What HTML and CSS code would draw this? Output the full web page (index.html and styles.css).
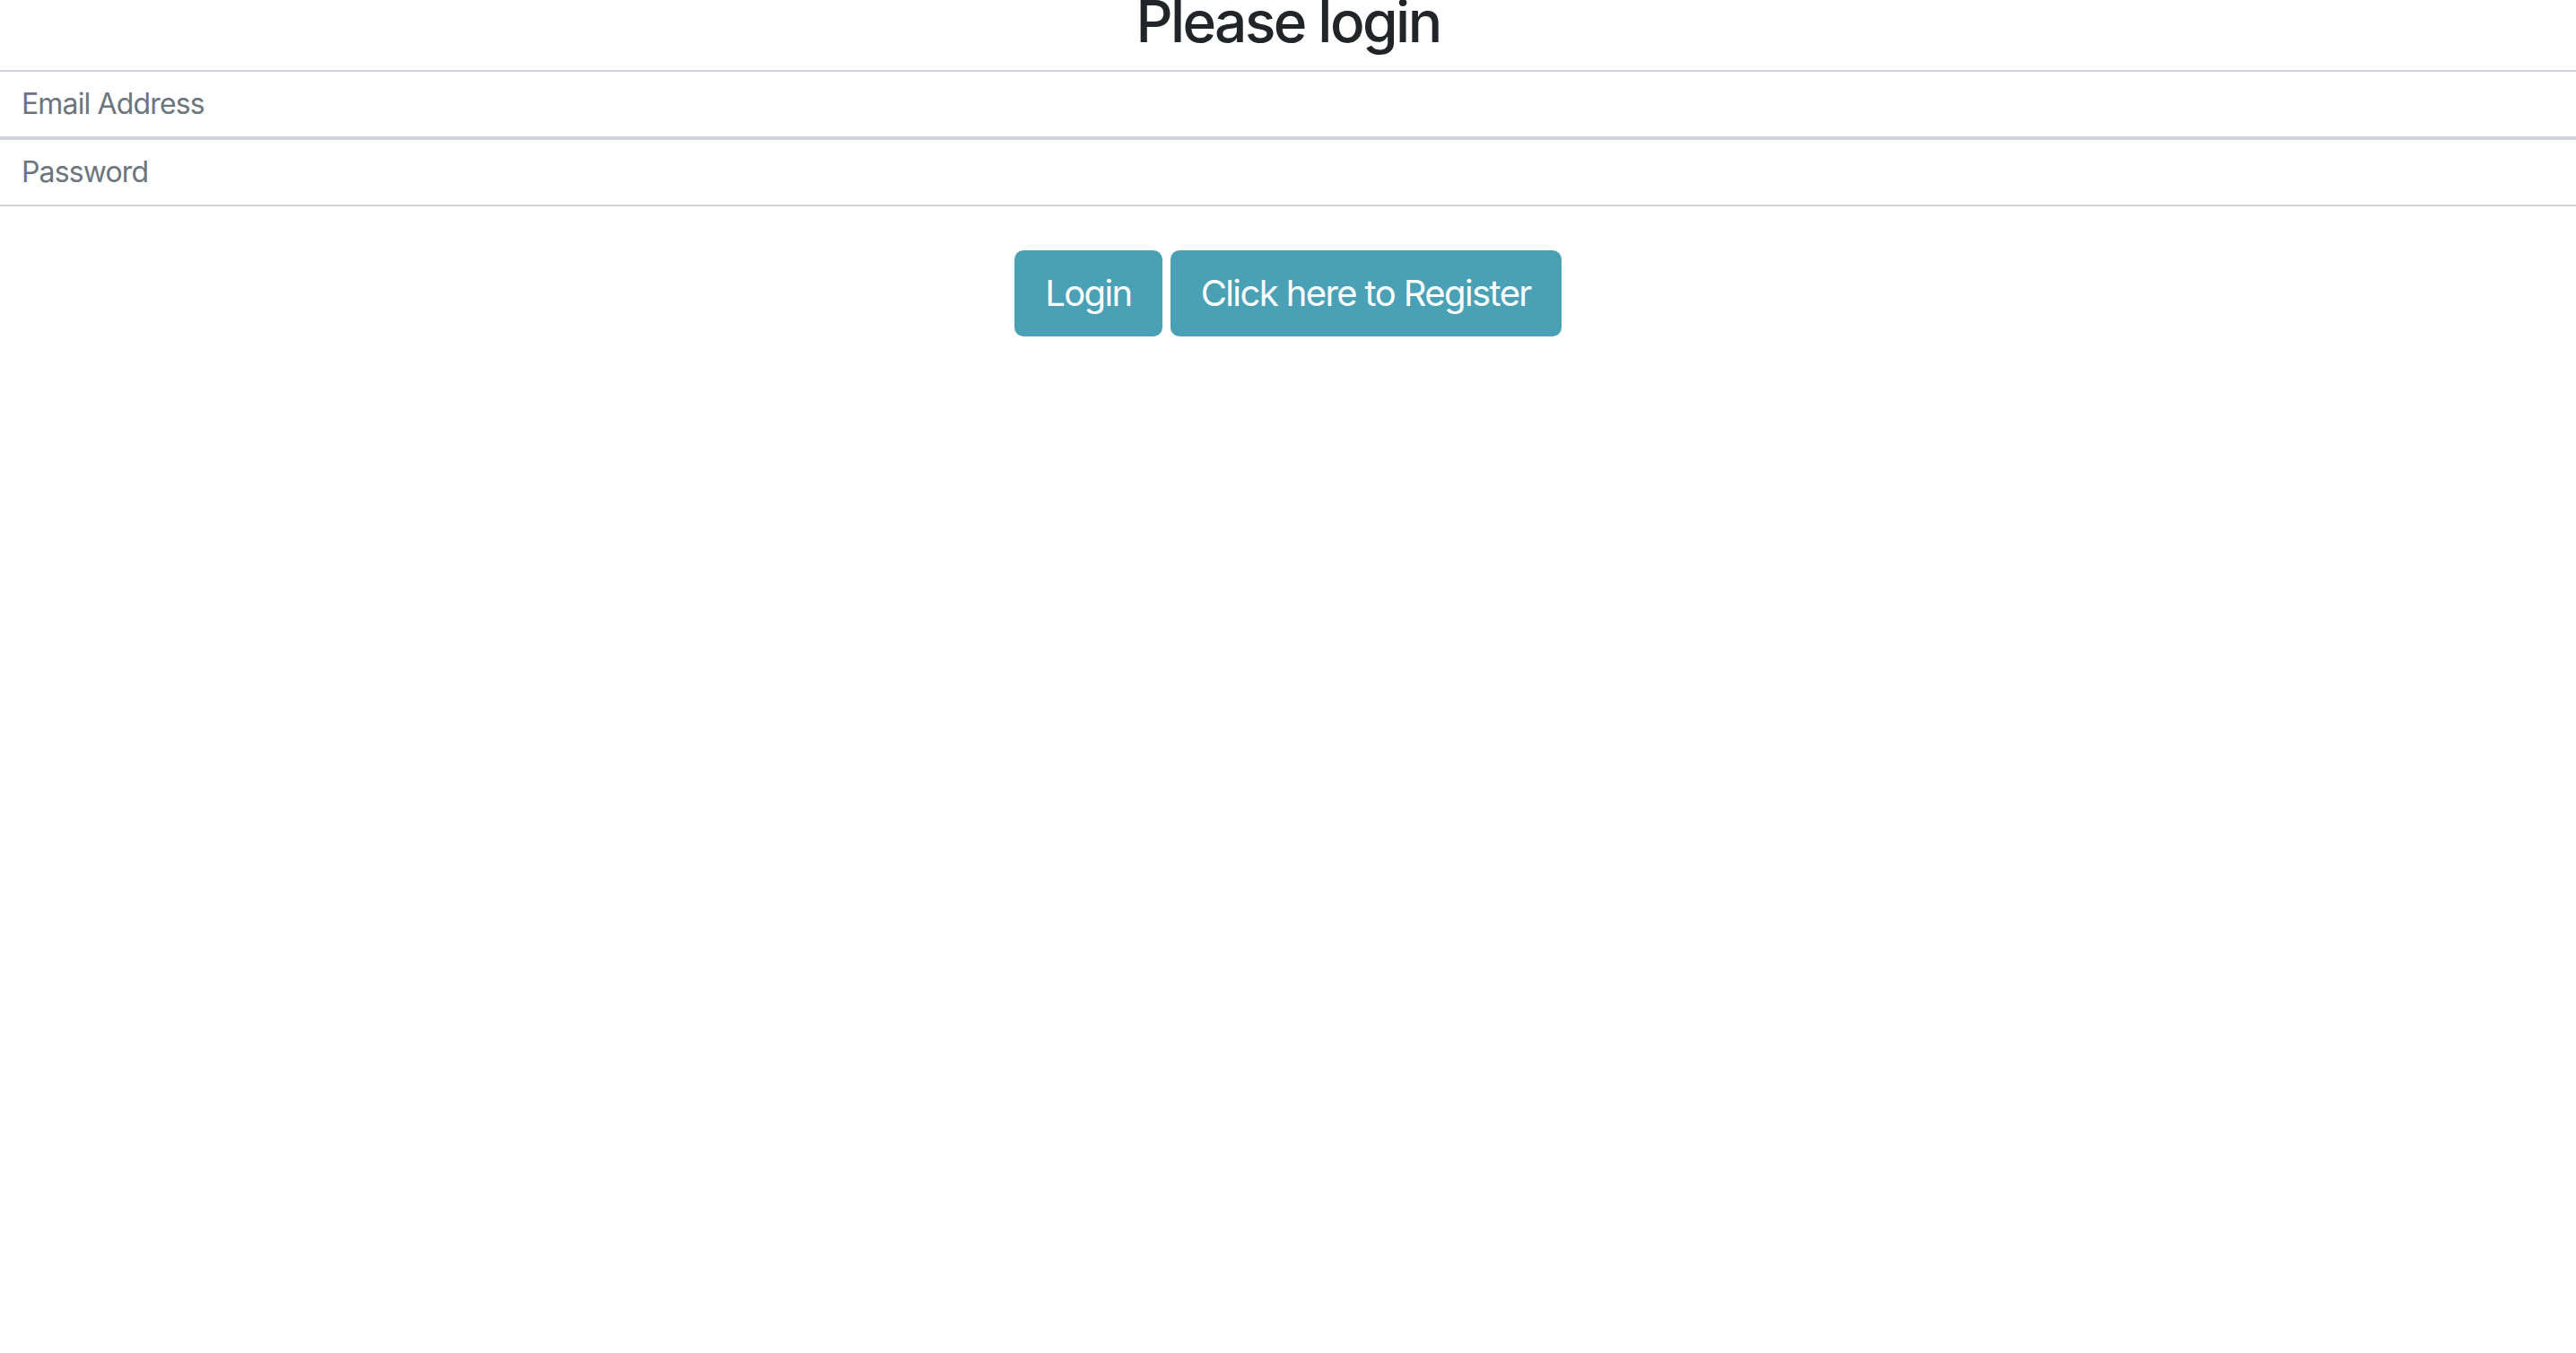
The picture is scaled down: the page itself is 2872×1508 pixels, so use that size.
FILE: index.html
```html
<!DOCTYPE html>
<html lang="en">
<head>
<meta charset="utf-8">
<title>Please login</title>
<link rel="stylesheet" href="styles.css">
</head>
<body>
<form class="login-form">
  <h2 class="title">Please login</h2>
  <input class="field" type="email" placeholder="Email Address">
  <input class="field" type="password" placeholder="Password">
  <div class="actions">
    <button type="button" class="btn">Login</button>
    <button type="button" class="btn">Click here to Register</button>
  </div>
</form>
</body>
</html>
```

FILE: styles.css
```css
html, body {
  margin: 0;
  padding: 0;
  background: #ffffff;
  overflow-x: hidden;
}

body {
  font-family: Inter, "Noto Sans", "Liberation Sans", sans-serif;
  color: #212529;
}

.login-form {
  display: flex;
  flex-direction: column;
}

.title {
  font-size: 64px;
  font-weight: 500;
  line-height: 1.2;
  letter-spacing: -0.04em;
  text-align: center;
  margin: -14px 0 15px;
  color: #212529;
}

.field {
  display: block;
  box-sizing: border-box;
  width: auto;
  height: 76px;
  padding: 12px 28px;
  margin: 0 -6px;
  font-family: inherit;
  font-size: 32px;
  line-height: 1.5;
  letter-spacing: -0.027em;
  color: #495057;
  background: #ffffff;
  border: 2px solid #ced4da;
  border-radius: 8px;
  outline: none;
}

.field::placeholder {
  color: #6c757d;
  opacity: 1;
}

.actions {
  display: flex;
  justify-content: center;
  gap: 9px;
  margin-top: 49px;
}

.btn {
  font-family: inherit;
  font-size: 40px;
  font-weight: 400;
  line-height: 1.5;
  letter-spacing: -0.04em;
  padding: 16px 32px;
  color: #ffffff;
  background: #4aa0b5;
  border: 2px solid #4aa0b5;
  border-radius: 10px;
  cursor: pointer;
}
```
